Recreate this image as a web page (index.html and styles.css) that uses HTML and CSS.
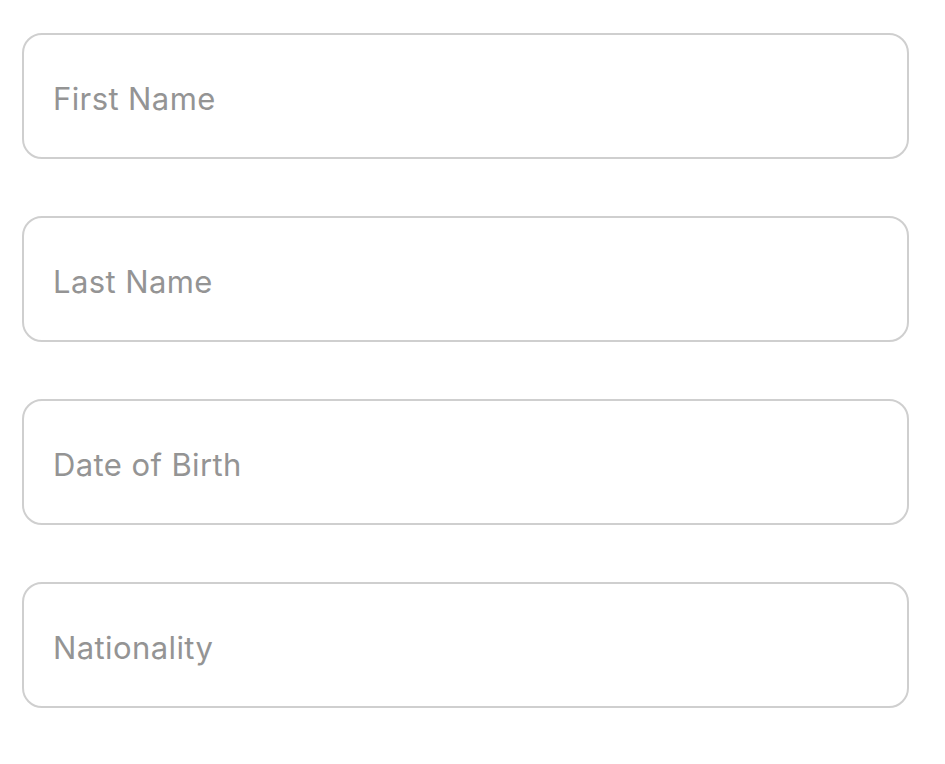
FILE: index.html
```html
<!DOCTYPE html>
<html lang="en">
<head>
  <meta charset="UTF-8" />
  <title>Personal Details</title>
  <link rel="stylesheet" href="styles.css">
</head>
<body>
  <div class="container">
    <input type="text" class="field" placeholder="First Name">
    <input type="text" class="field" placeholder="Last Name">
    <input type="text" class="field" placeholder="Date of Birth">
    <input type="text" class="field" placeholder="Nationality">
  </div>
</body>
</html>
```

FILE: styles.css
```css
body {
  margin: 0;
  background-color: white;
  font-family: Inter, "Liberation Sans", sans-serif;
}
.container {
  display: flex;
  flex-direction: column;
  gap: 57px;
  padding: 33px 36px 0 22px;
}
.field {
  box-sizing: border-box;
  width: 887px;
  height: 126px;
  padding: 5px 0 0 29px;
  border: 2px solid #cfcfcf;
  border-radius: 20px;
  font-family: Inter, "Liberation Sans", sans-serif;
  font-size: 31px;
  letter-spacing: 0.4px;
  color: #555;
  outline: none;
}
.field::placeholder {
  color: #949494;
}
```
